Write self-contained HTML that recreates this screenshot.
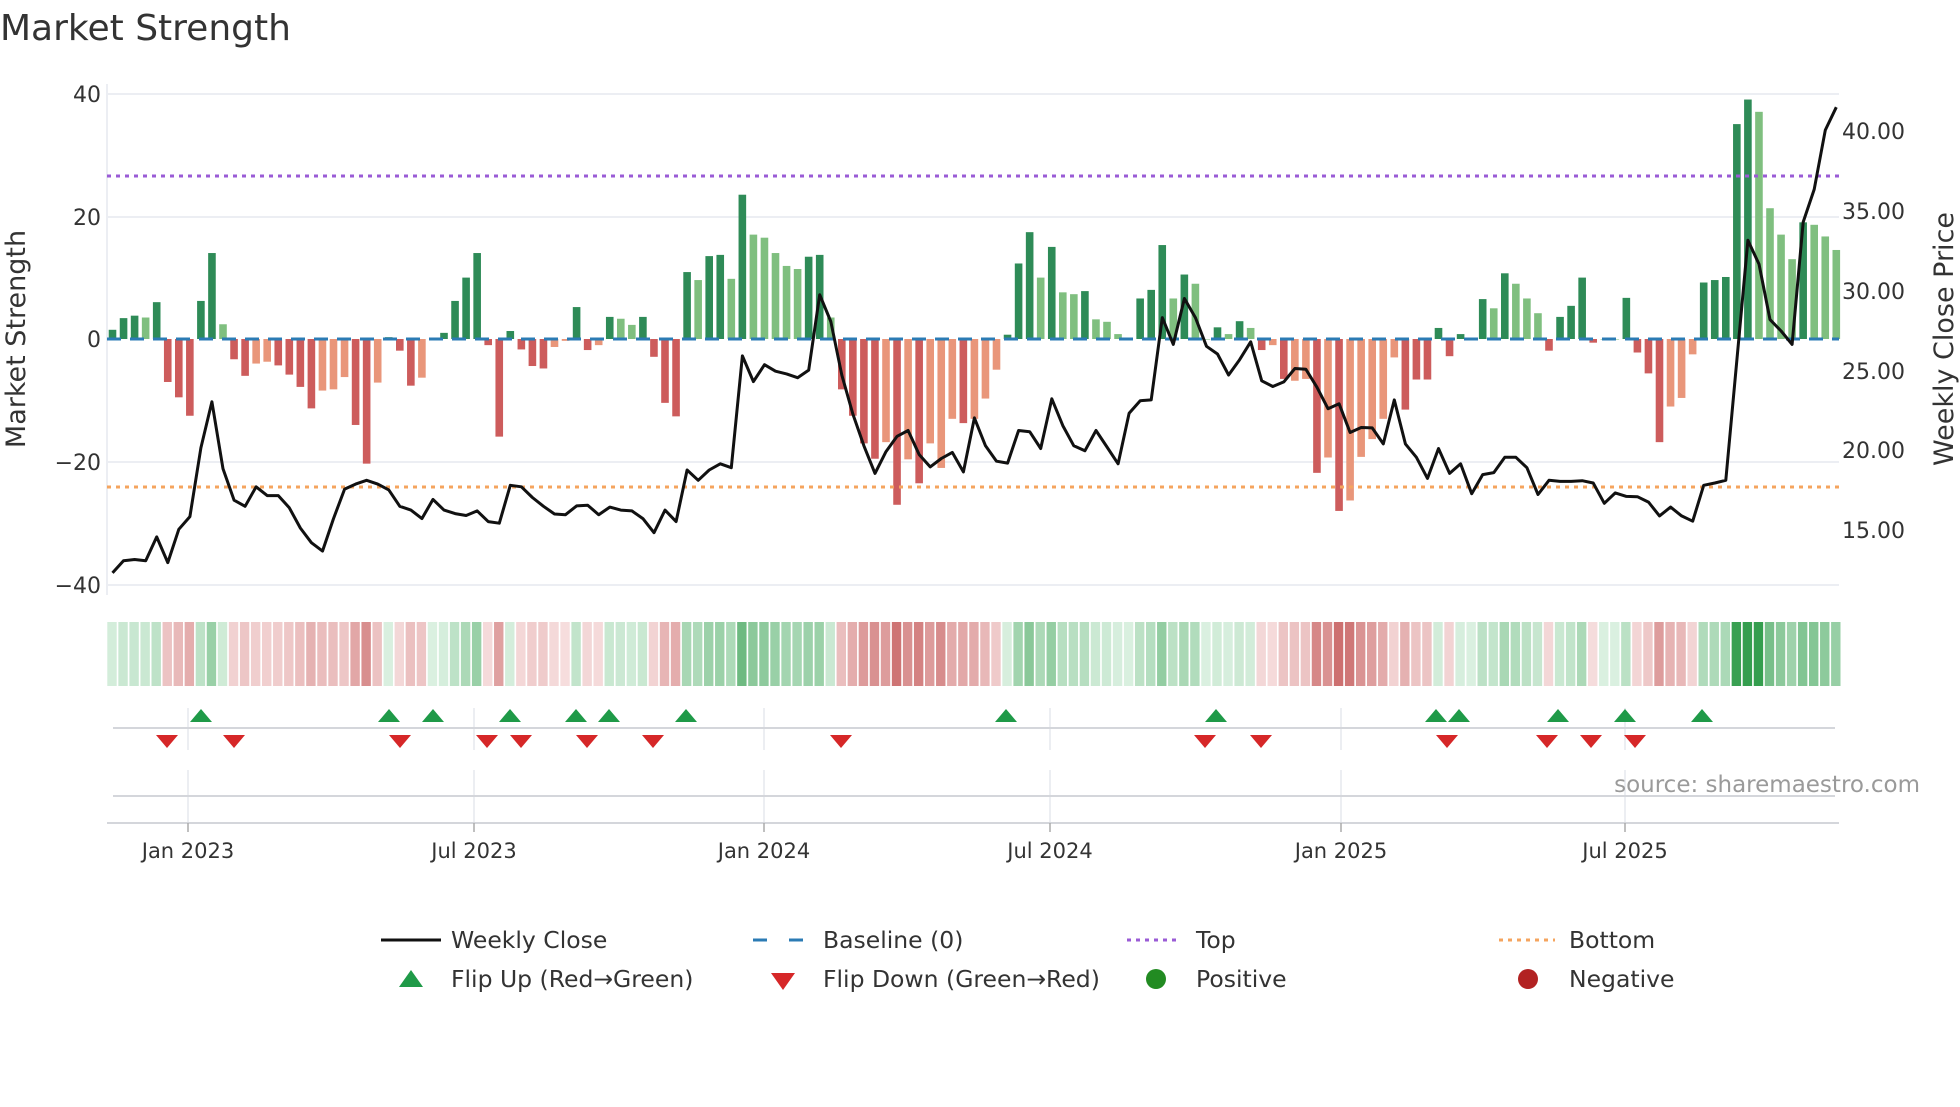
<!DOCTYPE html>
<html><head><meta charset="utf-8"><style>
html,body{margin:0;padding:0;background:#fff;}
body{width:1960px;height:1102px;overflow:hidden;}
svg text{font-family:"DejaVu Sans","Liberation Sans",sans-serif;fill:#333;}
</style></head><body>
<svg id="s" width="1960" height="1102" viewBox="0 0 1960 1102" xmlns="http://www.w3.org/2000/svg">
<text x="0" y="40" font-size="36">Market Strength</text>
<g id="grid" stroke="#eceef3" stroke-width="2">
<line x1="107" y1="94" x2="1839" y2="94"/><line x1="107" y1="217" x2="1839" y2="217"/>
<line x1="107" y1="462" x2="1839" y2="462"/><line x1="107" y1="585" x2="1839" y2="585"/>
<line x1="107" y1="84" x2="107" y2="595"/>
</g>
<g font-size="22" text-anchor="end">
<text x="101" y="102">40</text><text x="101" y="225">20</text><text x="101" y="347">0</text>
<text x="101" y="470">−20</text><text x="101" y="593">−40</text>
</g>
<g font-size="22">
<text x="1842" y="139">40.00</text><text x="1842" y="219">35.00</text><text x="1842" y="299">30.00</text>
<text x="1842" y="379">25.00</text><text x="1842" y="458">20.00</text><text x="1842" y="538">15.00</text>
</g>
<text font-size="27" text-anchor="middle" transform="translate(25,339) rotate(-90)">Market Strength</text>
<text font-size="27" text-anchor="middle" transform="translate(1953,339) rotate(-90)">Weekly Close Price</text>
<g id="bars"></g>
<line x1="107" y1="339" x2="1839" y2="339" stroke="#2b7bb4" stroke-width="3" stroke-dasharray="14 9"/>
<line x1="107" y1="176" x2="1839" y2="176" stroke="#9a5bd6" stroke-width="3" stroke-dasharray="4 5"/>
<line x1="107" y1="487" x2="1839" y2="487" stroke="#f5a45e" stroke-width="3" stroke-dasharray="4 5"/>
<polyline id="line" fill="none" stroke="#111" stroke-width="3" stroke-linejoin="round"/>
<g id="heat"></g>
<g stroke="#e6e8ee" stroke-width="1.5">
<line x1="188" y1="708" x2="188" y2="750"/><line x1="474" y1="708" x2="474" y2="750"/><line x1="764" y1="708" x2="764" y2="750"/><line x1="1050" y1="708" x2="1050" y2="750"/><line x1="1341" y1="708" x2="1341" y2="750"/><line x1="1625" y1="708" x2="1625" y2="750"/>
<line x1="188" y1="770" x2="188" y2="822"/><line x1="474" y1="770" x2="474" y2="822"/><line x1="764" y1="770" x2="764" y2="822"/><line x1="1050" y1="770" x2="1050" y2="822"/><line x1="1341" y1="770" x2="1341" y2="822"/><line x1="1625" y1="770" x2="1625" y2="822"/>
</g>
<line x1="113" y1="728" x2="1835" y2="728" stroke="#d4d6db" stroke-width="2"/>
<line x1="113" y1="796" x2="1835" y2="796" stroke="#d4d6db" stroke-width="2"/>
<line x1="107" y1="823" x2="1839" y2="823" stroke="#d4d6db" stroke-width="2"/>
<g stroke="#aaa" stroke-width="1.5">
<line x1="188" y1="823" x2="188" y2="832"/><line x1="474" y1="823" x2="474" y2="832"/><line x1="764" y1="823" x2="764" y2="832"/><line x1="1050" y1="823" x2="1050" y2="832"/><line x1="1341" y1="823" x2="1341" y2="832"/><line x1="1625" y1="823" x2="1625" y2="832"/>
</g>
<g id="marks"></g>
<g font-size="21" text-anchor="middle">
<text x="188" y="858">Jan 2023</text><text x="474" y="858">Jul 2023</text><text x="764" y="858">Jan 2024</text>
<text x="1050" y="858">Jul 2024</text><text x="1341" y="858">Jan 2025</text><text x="1625" y="858">Jul 2025</text>
</g>
<text x="1920" y="792" font-size="23" text-anchor="end" style="fill:#9a9a9a">source: sharemaestro.com</text>
<g font-size="23.5">
<line x1="381" y1="940" x2="441" y2="940" stroke="#111" stroke-width="3"/>
<text x="451" y="948">Weekly Close</text>
<line x1="753" y1="940" x2="811" y2="940" stroke="#2b7bb4" stroke-width="3" stroke-dasharray="14 22"/>
<text x="823" y="948">Baseline (0)</text>
<line x1="1127" y1="940" x2="1181" y2="940" stroke="#9a5bd6" stroke-width="3" stroke-dasharray="4 5"/>
<text x="1196" y="948">Top</text>
<line x1="1499" y1="940" x2="1555" y2="940" stroke="#f5a45e" stroke-width="3" stroke-dasharray="4 5"/>
<text x="1569" y="948">Bottom</text>
<polygon points="399,987 423,987 411,970" fill="#1f9a48"/>
<text x="451" y="987">Flip Up (Red→Green)</text>
<polygon points="771,973 795,973 783,990" fill="#d62728"/>
<text x="823" y="987">Flip Down (Green→Red)</text>
<circle cx="1156" cy="979" r="10" fill="#228b22"/>
<text x="1196" y="987">Positive</text>
<circle cx="1528" cy="979" r="10" fill="#b22222"/>
<text x="1569" y="987">Negative</text>
</g>
</svg>
<script>
(function(){
var B="1.5d 3.4d 3.8d 3.5l 6d -7r -9.5r -12.5r 6.2d 14d 2.4l -3.3r -6r -4s -3.7s -4.3r -5.8r -7.8r -11.3r -8.4s -8.2s -6.2s -14r -20.3r -7.1s 0.3d -1.9r -7.6r -6.3s 0.1l 1d 6.2d 10d 14d -1r -15.9r 1.3d -1.7r -4.4r -4.8r -1.3s -0.3s 5.2d -1.8r -1s 3.6d 3.3l 2.3l 3.6d -2.9r -10.4r -12.6r 10.9d 9.6l 13.5d 13.7d 9.8l 23.5d 17l 16.5l 14l 11.9l 11.4l 13.4d 13.7d 3.5l -8.2r -12.5r -17r -19.5r -16.8s -27r -19.6s -23.5r -17s -21s -13s -13.7r -13s -9.7s -5s 0.7d 12.3d 17.4d 10l 15d 7.6l 7.3l 7.8d 3.2l 2.8l 0.8l 0.2l 6.6d 8d 15.3d 6.6l 10.5d 9l 0l 1.9d 0.8l 2.9d 1.8l -1.8r -1s -6.5r -6.8s -6.5s -21.8r -19.3s -28r -26.3s -19.2s -16.3s -13s -3s -11.5r -6.6r -6.6r 1.8d -2.8r 0.8d 0l 6.5d 5l 10.7d 9l 6.6l 4.2l -1.9r 3.6d 5.4d 10d -0.6r 0l 0l 6.7d -2.2r -5.6r -16.8r -11s -9.6s -2.5s 9.2d 9.6d 10.1d 35d 39d 37l 21.3l 17l 13l 19d 18.6l 16.7l 14.5l".split(" ");
var L=[1497,1465,1462,1465,1403,1470,1383,1350,1170,1050,1225,1307,1323,1272,1295,1295,1327,1380,1418,1440,1355,1278,1265,1255,1265,1280,1323,1333,1355,1305,1333,1342,1347,1335,1363,1367,1268,1272,1300,1323,1343,1345,1322,1320,1345,1325,1333,1335,1355,1392,1333,1363,1228,1255,1228,1212,1222,930,997,953,970,977,987,967,770,840,980,1082,1165,1237,1180,1140,1125,1188,1220,1198,1182,1233,1092,1165,1205,1210,1125,1128,1172,1042,1112,1165,1178,1125,1168,1212,1080,1047,1045,830,900,780,830,905,925,980,940,893,995,1010,998,963,965,1012,1068,1055,1130,1117,1118,1160,1045,1160,1195,1250,1172,1237,1212,1290,1240,1235,1195,1195,1222,1292,1255,1258,1258,1256,1262,1315,1288,1297,1298,1312,1348,1325,1348,1362,1268,1262,1255,940,628,690,835,865,900,580,495,340,280];
var C={d:"#2e8b57",l:"#7fbf7f",r:"#cd5c5c",s:"#e9967a"};
var ns="http://www.w3.org/2000/svg",bars=document.getElementById("bars"),heat=document.getElementById("heat");
function el(t,a,p){var e=document.createElementNS(ns,t);for(var k in a)e.setAttribute(k,a[k]);p.appendChild(e);return e;}
var pts=[];
function mix(a,b,t){t=Math.max(0,Math.min(1,t));return "rgb("+a.map(function(v,i){return Math.round(v+(b[i]-v)*t)}).join(",")+")";}
for(var i=0;i<B.length;i++){
 var s=B[i],ty=s.slice(-1),v=parseFloat(s),x=112.5+i*11.05,h=v*6.14;
 var y=h>=0?339-h:339;
 el("rect",{x:x-3.8,y:y,width:7.6,height:Math.max(Math.abs(h),0.5),fill:C[ty]},bars);
 var col=v>=0?mix([218,240,224],[52,158,78],v/36):mix([246,222,222],[205,112,112],-v/28);
 el("rect",{x:x-5.2,y:622,width:9.4,height:64,fill:col},heat);
 pts.push(x.toFixed(1)+","+(L[i]/2.613).toFixed(1));
}
document.getElementById("line").setAttribute("points",pts.join(" "));
var m=document.getElementById("marks");
[201,389,433,510,576,609,686,1006,1216,1436,1459,1558,1625,1702].forEach(function(x){el("polygon",{points:(x-11)+",722 "+(x+11)+",722 "+x+",709",fill:"#1f9a48"},m);});
[167,234,400,487,521,587,653,841,1205,1261,1447,1547,1591,1635].forEach(function(x){el("polygon",{points:(x-11)+",735 "+(x+11)+",735 "+x+",748",fill:"#d62728"},m);});
})();
</script>
</body></html>
